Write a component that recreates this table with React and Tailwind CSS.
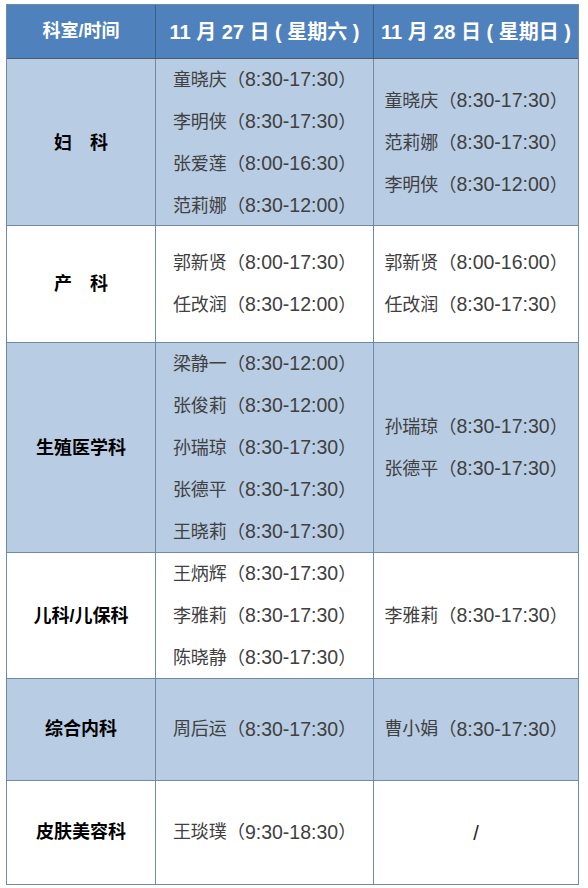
const rows = [
  {
    dept: "妇\u3000科",
    h: "h-[167px]",
    bg: "bg-[#b8cce4]",
    sat: [
      ["童晓庆", "8:30-17:30"],
      ["李明侠", "8:30-17:30"],
      ["张爱莲", "8:00-16:30"],
      ["范莉娜", "8:30-12:00"],
    ],
    sun: [
      ["童晓庆", "8:30-17:30"],
      ["范莉娜", "8:30-17:30"],
      ["李明侠", "8:30-12:00"],
    ],
  },
  {
    dept: "产\u3000科",
    h: "h-[117px]",
    bg: "bg-white",
    sat: [
      ["郭新贤", "8:00-17:30"],
      ["任改润", "8:30-12:00"],
    ],
    sun: [
      ["郭新贤", "8:00-16:00"],
      ["任改润", "8:30-17:30"],
    ],
  },
  {
    dept: "生殖医学科",
    h: "h-[210px]",
    bg: "bg-[#b8cce4]",
    sat: [
      ["梁静一", "8:30-12:00"],
      ["张俊莉", "8:30-12:00"],
      ["孙瑞琼", "8:30-17:30"],
      ["张德平", "8:30-17:30"],
      ["王晓莉", "8:30-17:30"],
    ],
    sun: [
      ["孙瑞琼", "8:30-17:30"],
      ["张德平", "8:30-17:30"],
    ],
  },
  {
    dept: "儿科/儿保科",
    h: "h-[126px]",
    bg: "bg-white",
    sat: [
      ["王炳辉", "8:30-17:30"],
      ["李雅莉", "8:30-17:30"],
      ["陈晓静", "8:30-17:30"],
    ],
    sun: [["李雅莉", "8:30-17:30"]],
  },
  {
    dept: "综合内科",
    h: "h-[102px]",
    bg: "bg-[#b8cce4]",
    sat: [["周后运", "8:30-17:30"]],
    sun: [["曹小娟", "8:30-17:30"]],
  },
  {
    dept: "皮肤美容科",
    h: "h-[103px]",
    bg: "bg-white",
    sat: [["王琰璞", "9:30-18:30"]],
    sun: null,
  },
];

function Names({ list }) {
  if (!list) {
    return <div className="text-[20px] text-[#222]">/</div>;
  }
  return (
    <div className="flex flex-col">
      {list.map(([name, time], i) => (
        <div key={i} className="h-[42px] flex items-center justify-center text-[#404040] whitespace-nowrap">
          <span className="text-[18px]">{name}（</span>
          <span className="text-[19.5px]">{time}</span>
          <span className="text-[18px]">）</span>
        </div>
      ))}
    </div>
  );
}

export default function App() {
  return (
    <div
      className="w-[588px] h-[888px] bg-white pt-[4px] pl-[6px]"
      style={{ fontFamily: '"Liberation Sans", "Noto Sans CJK SC", sans-serif' }}
    >
      <div className="w-[573px] border border-[#6f8aa6]">
        <div className="grid grid-cols-[149px_218px_1fr] h-[54px] bg-[#4f81bd] text-white font-bold border-b border-[#4a5a6a]">
          <div className="flex items-center justify-center text-[18px] border-r border-[#3d5f88]">科室/时间</div>
          <div className="flex items-center justify-center text-[20px] border-r border-[#3d5f88] whitespace-nowrap">11 月 27 日 ( 星期六 )</div>
          <div className="flex items-center justify-center text-[20px] whitespace-nowrap">11 月 28 日 ( 星期日 )</div>
        </div>
        {rows.map((r, i) => (
          <div
            key={i}
            className={`grid grid-cols-[149px_218px_1fr] ${r.h} ${r.bg} ${i < rows.length - 1 ? "border-b border-[#6f8aa6]" : ""}`}
          >
            <div className="flex items-center justify-center text-[18px] font-bold text-black border-r border-[#6f8aa6]">
              {r.dept}
            </div>
            <div className="flex items-center justify-center border-r border-[#6f8aa6]">
              <Names list={r.sat} />
            </div>
            <div className="flex items-center justify-center">
              <Names list={r.sun} />
            </div>
          </div>
        ))}
      </div>
    </div>
  );
}
